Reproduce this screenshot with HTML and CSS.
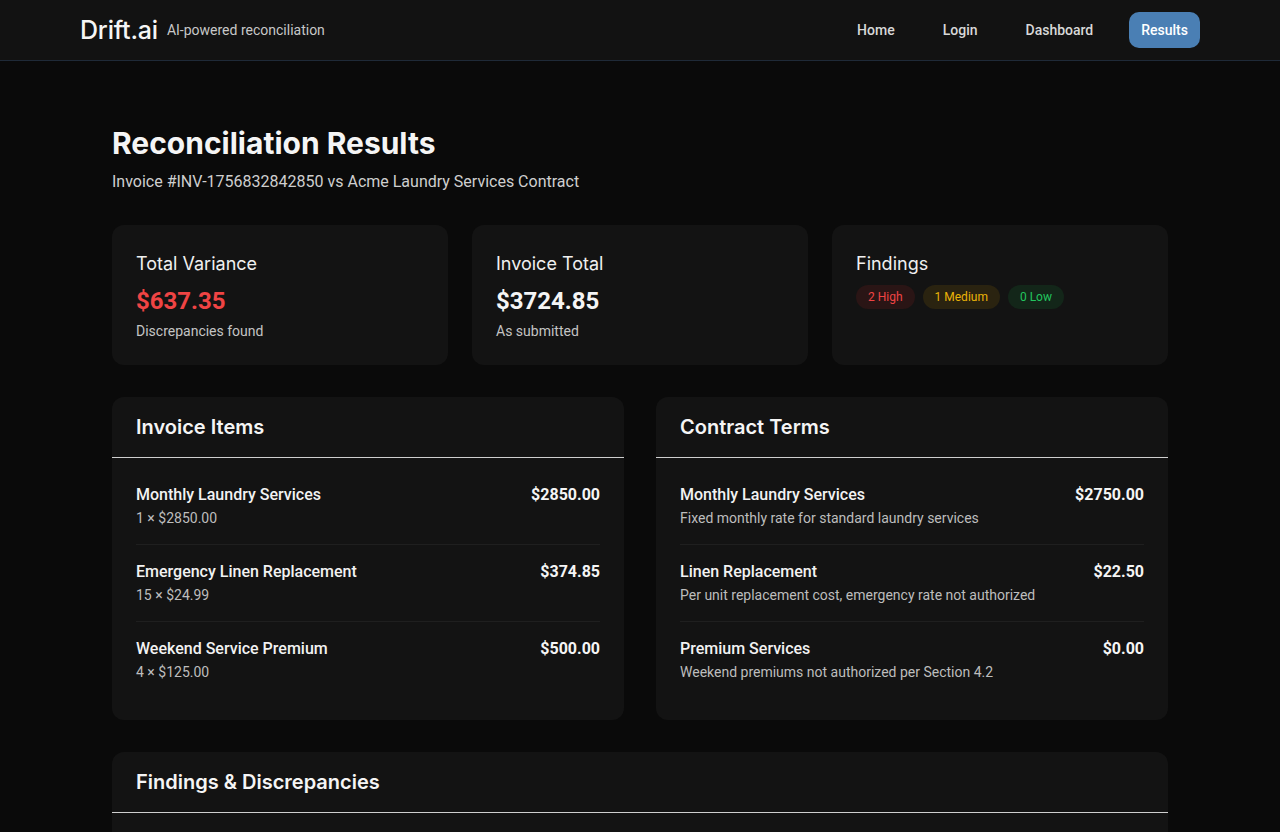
FILE: index.html
```html
<!DOCTYPE html>
<html lang="en">
<head>
<meta charset="utf-8">
<title>Reconciliation Results - Drift.ai</title>
<link rel="stylesheet" href="styles.css">
</head>
<body>
<header class="topbar">
  <div class="brand">
    <span class="logo">Drift.ai</span>
    <span class="tagline">AI-powered reconciliation</span>
  </div>
  <nav class="nav">
    <a class="nav-link" href="#">Home</a>
    <a class="nav-link" href="#">Login</a>
    <a class="nav-link" href="#">Dashboard</a>
    <a class="nav-link active" href="#">Results</a>
  </nav>
</header>

<main class="main">
  <h1 class="page-title">Reconciliation Results</h1>
  <p class="page-sub">Invoice #INV-1756832842850 vs Acme Laundry Services Contract</p>

  <section class="summary">
    <div class="card">
      <h3 class="card-title">Total Variance</h3>
      <div class="card-value danger">$637.35</div>
      <div class="card-sub">Discrepancies found</div>
    </div>
    <div class="card">
      <h3 class="card-title">Invoice Total</h3>
      <div class="card-value">$3724.85</div>
      <div class="card-sub">As submitted</div>
    </div>
    <div class="card">
      <h3 class="card-title">Findings</h3>
      <div class="badges">
        <span class="badge high">2 High</span>
        <span class="badge medium">1 Medium</span>
        <span class="badge low">0 Low</span>
      </div>
    </div>
  </section>

  <section class="panels">
    <div class="panel">
      <div class="panel-head"><h2>Invoice Items</h2></div>
      <div class="panel-body">
        <div class="row">
          <div class="row-info">
            <div class="row-title">Monthly Laundry Services</div>
            <div class="row-sub">1 × $2850.00</div>
          </div>
          <div class="row-amount">$2850.00</div>
        </div>
        <div class="row">
          <div class="row-info">
            <div class="row-title">Emergency Linen Replacement</div>
            <div class="row-sub">15 × $24.99</div>
          </div>
          <div class="row-amount">$374.85</div>
        </div>
        <div class="row">
          <div class="row-info">
            <div class="row-title">Weekend Service Premium</div>
            <div class="row-sub">4 × $125.00</div>
          </div>
          <div class="row-amount">$500.00</div>
        </div>
      </div>
    </div>
    <div class="panel">
      <div class="panel-head"><h2>Contract Terms</h2></div>
      <div class="panel-body">
        <div class="row">
          <div class="row-info">
            <div class="row-title">Monthly Laundry Services</div>
            <div class="row-sub">Fixed monthly rate for standard laundry services</div>
          </div>
          <div class="row-amount">$2750.00</div>
        </div>
        <div class="row">
          <div class="row-info">
            <div class="row-title">Linen Replacement</div>
            <div class="row-sub">Per unit replacement cost, emergency rate not authorized</div>
          </div>
          <div class="row-amount">$22.50</div>
        </div>
        <div class="row">
          <div class="row-info">
            <div class="row-title">Premium Services</div>
            <div class="row-sub">Weekend premiums not authorized per Section 4.2</div>
          </div>
          <div class="row-amount">$0.00</div>
        </div>
      </div>
    </div>
  </section>

  <section class="panel findings">
    <div class="panel-head"><h2>Findings &amp; Discrepancies</h2></div>
    <div class="panel-body findings-body"></div>
  </section>
</main>
</body>
</html>
```

FILE: styles.css
```css
* { box-sizing: border-box; }

html, body {
  margin: 0;
  padding: 0;
}

body {
  background: #0a0a0a;
  color: #f2f2f2;
  font-family: Roboto, "Noto Sans", sans-serif;
}

.topbar {
  height: 61px;
  background: #121212;
  border-bottom: 1px solid #1f2a38;
  display: flex;
  align-items: center;
  justify-content: space-between;
  padding: 0 80px;
}

.brand {
  display: flex;
  align-items: center;
  gap: 9px;
}

.logo {
  font-family: Inter, sans-serif;
  font-size: 25px;
  line-height: 30px;
  font-weight: 500;
  color: #f5f5f5;
  letter-spacing: -0.2px;
}

.tagline {
  font-size: 14px;
  line-height: 20px;
  color: #c8c8c8;
}

.nav {
  display: flex;
  align-items: center;
  gap: 24px;
}

.nav-link {
  font-size: 14px;
  font-weight: 500;
  color: #d8d8d8;
  text-decoration: none;
  padding: 0 12px;
  height: 36px;
  line-height: 36px;
  border-radius: 10px;
}

.nav-link.active {
  background: #4a7fb4;
  color: #ffffff;
}

.main {
  width: 1056px;
  margin: 0 auto;
  padding-top: 64px;
  padding-bottom: 40px;
}

.page-title {
  font-family: Inter, sans-serif;
  font-size: 30px;
  line-height: 36px;
  font-weight: 700;
  margin: 0;
  color: #f5f5f5;
}

.page-sub {
  font-size: 16px;
  line-height: 24px;
  margin: 9px 0 0;
  color: #cfcfcf;
}

.summary {
  margin-top: 31px;
  display: grid;
  grid-template-columns: repeat(3, 1fr);
  gap: 24px;
}

.card {
  background: #131313;
  border-radius: 12px;
  padding: 25px 24px 24px;
  height: 140px;
}

.card-title {
  font-family: Inter, sans-serif;
  font-size: 18px;
  line-height: 28px;
  font-weight: 400;
  margin: 0;
  color: #f0f0f0;
}

.card-value {
  margin-top: 8px;
  font-size: 24px;
  line-height: 30px;
  font-weight: 700;
  color: #f5f5f5;
}

.card-value.danger {
  color: #ef4444;
}

.card-sub {
  margin-top: 5px;
  font-size: 14px;
  line-height: 20px;
  color: #c4c4c4;
}

.badges {
  margin-top: 7px;
  display: flex;
  gap: 8px;
}

.badge {
  font-size: 12px;
  line-height: 16px;
  padding: 4px 12px;
  border-radius: 12px;
}

.badge.high { background: #2a1515; color: #ef4444; }
.badge.medium { background: #2a2310; color: #eab308; }
.badge.low { background: #132619; color: #22c55e; }

.panels {
  margin-top: 32px;
  display: grid;
  grid-template-columns: 1fr 1fr;
  gap: 32px;
}

.panel {
  background: #131313;
  border-radius: 12px;
}

.panel-head {
  height: 61px;
  padding: 0 24px;
  display: flex;
  align-items: center;
  border-bottom: 1px solid #cfcfcf;
}

.panel-head h2 {
  margin: 0;
  font-family: Inter, sans-serif;
  font-size: 20px;
  font-weight: 600;
  color: #f5f5f5;
}

.panel-body {
  padding: 10px 24px 22px;
}

.row {
  display: flex;
  justify-content: space-between;
  align-items: flex-start;
  padding: 16px 0;
  border-bottom: 1px solid #1f1f1f;
}

.row:last-child {
  border-bottom: none;
}

.row-title {
  font-size: 16px;
  line-height: 22px;
  font-weight: 500;
  color: #f2f2f2;
}

.row-sub {
  margin-top: 2px;
  font-size: 14px;
  line-height: 20px;
  color: #bdbdbd;
}

.row-amount {
  font-size: 16px;
  line-height: 22px;
  font-weight: 700;
  color: #f5f5f5;
}

.findings {
  margin-top: 32px;
}

.findings-body {
  height: 80px;
}
```
